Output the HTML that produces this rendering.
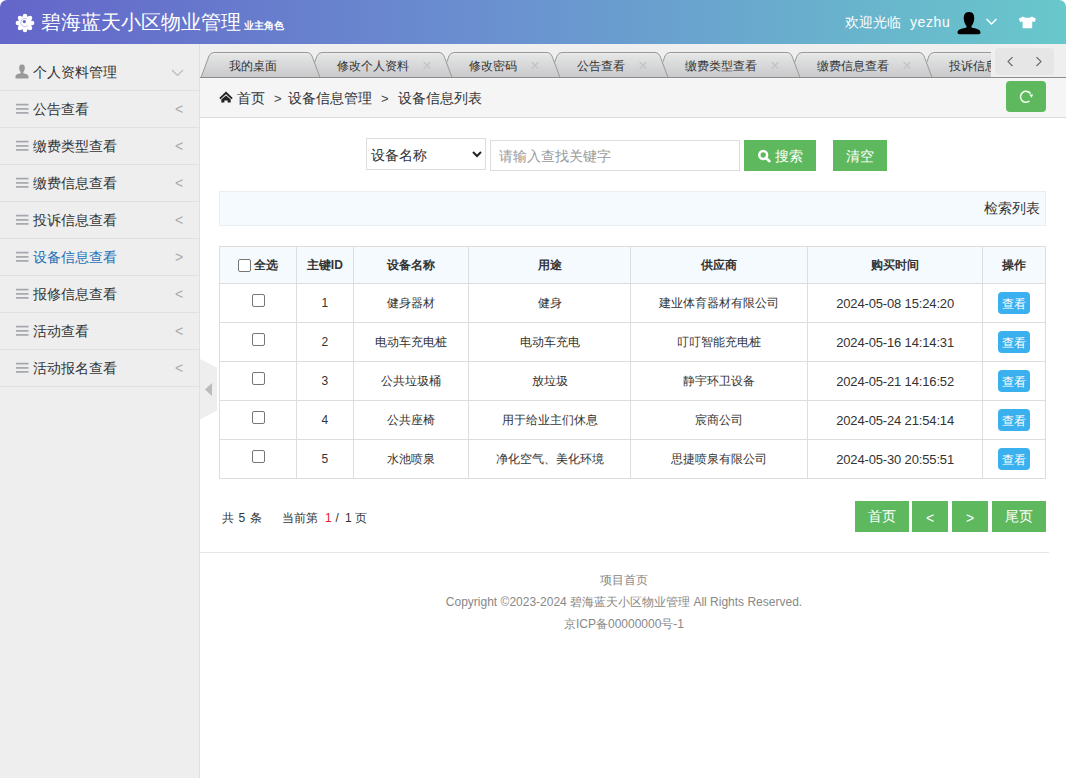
<!DOCTYPE html>
<html><head><meta charset="utf-8">
<style>
*{margin:0;padding:0;box-sizing:border-box;}
html,body{width:1066px;height:778px;overflow:hidden;background:#fff;font-family:"Liberation Sans",sans-serif;font-size:14px;color:#333;}
.a{position:absolute;white-space:nowrap;}
#hd{position:absolute;left:0;top:0;width:1066px;height:44px;background:linear-gradient(90deg,#6466c9 0%,#6a8fd0 45%,#68c8cb 100%);border-radius:7px 7px 0 0;}
#hd .logo{position:absolute;left:41px;top:8px;color:#fff;font-size:20px;line-height:28px;white-space:nowrap;}
#hd .logo small{font-size:10px;font-weight:bold;margin-left:3px;}
#hd .r{position:absolute;top:12px;color:#fff;font-size:14px;line-height:20px;white-space:nowrap;}
#side{position:absolute;left:0;top:44px;width:200px;height:734px;background:#eee;border-right:1px solid #e0e0e0;}
#side .it{position:absolute;left:0;width:199px;height:37px;border-bottom:1px solid #e0e0e0;}
#side .it span.t{position:absolute;left:33px;top:8px;font-size:14px;line-height:20px;color:#333;}
#side .it .ar{position:absolute;left:175px;top:8px;font-size:14px;line-height:20px;color:#aaa;}
#side .ham{position:absolute;left:15px;top:12px;width:14px;height:12px;}
#tabbar{position:absolute;left:200px;top:44px;width:866px;height:34px;background:#efefef;}
#crumb{position:absolute;left:200px;top:78px;width:866px;height:40px;background:#f5f5f5;border-bottom:1px solid #ddd;}
.g{position:absolute;background:#5eb95e;color:#fff;text-align:center;border-radius:2px;font-size:14px;}
.sel{position:absolute;left:366px;top:138px;width:120px;height:32px;border:1px solid #ddd;background:#fff;}
.inp{position:absolute;left:490px;top:140px;width:250px;height:31px;border:1px solid #ddd;background:#fff;}
.bar{position:absolute;left:219px;top:191px;width:827px;height:35px;border:1px solid #eaeef2;background:#f5fafe;}
table{position:absolute;left:219px;top:246px;border-collapse:collapse;width:827px;}
td,th{border:1px solid #ddd;text-align:center;font-size:12px;color:#333;}
th{height:37px;background:#f5fafe;font-weight:bold;}
td{height:39px;}
.cb{display:inline-block;width:13px;height:13px;border:1px solid #767676;border-radius:2px;background:#fff;vertical-align:middle;}
.view{display:inline-block;width:32px;height:22px;line-height:20px;padding-top:2px;vertical-align:top;background:#3ab1ee;color:#fff;border-radius:4px;font-size:12px;position:relative;left:0px;}
.dt{font-size:13px;letter-spacing:-0.15px;}
.pg{position:absolute;top:501px;height:31px;line-height:31px;background:#5eb95e;color:#fff;text-align:center;font-size:14px;}
.pt{top:510px;font-size:12px;line-height:17px;}
.ft{position:absolute;left:200px;width:848px;text-align:center;font-size:12px;color:#888;line-height:16px;}
</style></head><body>
<div id="hd">
  <svg class="a" style="left:14px;top:11.5px;" width="22" height="22" viewBox="0 0 22 22">
    <g fill="#fff"><circle cx="11" cy="11" r="6.9"/><circle cx="18.10" cy="11.00" r="2.25"/><circle cx="16.02" cy="16.02" r="2.25"/><circle cx="11.00" cy="18.10" r="2.25"/><circle cx="5.98" cy="16.02" r="2.25"/><circle cx="3.90" cy="11.00" r="2.25"/><circle cx="5.98" cy="5.98" r="2.25"/><circle cx="11.00" cy="3.90" r="2.25"/><circle cx="16.02" cy="5.98" r="2.25"/></g>
    <path d="M14.2 13.2 A4.2 4.2 0 1 1 13.2 7" fill="none" stroke="#6466c9" stroke-width="0.7" opacity="0.55"/>
    <circle cx="10.3" cy="9.6" r="1.6" fill="#6466c9"/>
  </svg>
  <div class="logo">碧海蓝天小区物业管理<small>业主角色</small></div>
  <div class="r" style="left:845px;">欢迎光临</div>
  <div class="r" style="left:910px;letter-spacing:0.6px;">yezhu</div>
  <svg class="a" style="left:956px;top:11px;" width="26" height="24" viewBox="0 0 26 24">
    <path d="M13 1 C8.5 1 7.5 4.5 7.8 8 C8 11 9.5 14 10.5 15 L10.5 16.5 C6 17.5 1.5 18.5 1.5 21.5 C1.5 23 3 23.3 5 23.3 L21 23.3 C23 23.3 24.5 23 24.5 21.5 C24.5 18.5 20 17.5 15.5 16.5 L15.5 15 C16.5 14 18 11 18.2 8 C18.5 4.5 17.5 1 13 1 Z" fill="#000"/>
  </svg>
  <svg class="a" style="left:985px;top:17px;" width="13" height="9" viewBox="0 0 13 9"><path d="M1.5 2 L6.5 7 L11.5 2" stroke="#fff" stroke-width="1.5" fill="none"/></svg>
  <svg class="a" style="left:1018px;top:16px;" width="19" height="13" viewBox="0 0 19 13"><path d="M5 0.4 L0.8 2.8 L2.2 6.1 L4.6 5.4 L4.6 12.2 L14.2 12.2 L14.2 5.4 L16.6 6.1 L18 2.8 L13.8 0.4 C12.4 2.3 6.4 2.3 5 0.4 Z" fill="#fff"/></svg>
</div>
<div id="side">
  <div class="it" style="top:10px;">
    <svg class="a" style="left:15px;top:10px;" width="14" height="15" viewBox="0 0 14 15"><path d="M7 0.5 C4.5 0.5 4 2.5 4.2 4.5 C4.4 6.5 5.2 7.6 5.7 8.2 L5.7 9.2 C3 9.8 0.5 10.5 0.5 12.5 L0.5 14.5 L13.5 14.5 L13.5 12.5 C13.5 10.5 11 9.8 8.3 9.2 L8.3 8.2 C8.8 7.6 9.6 6.5 9.8 4.5 C10 2.5 9.5 0.5 7 0.5 Z" fill="#999"/></svg>
    <span class="t">个人资料管理</span>
    <svg class="a" style="left:171px;top:15px;" width="13" height="8" viewBox="0 0 13 8"><path d="M1 1 L6.5 6.5 L12 1" stroke="#bbb" stroke-width="1.2" fill="none"/></svg>
  </div>
  <div class="it" style="top:47px;"><svg class="ham" width="14" height="12" viewBox="0 0 14 12"><rect x="1" y="0.75" width="12.5" height="1.7" fill="#a3a7ad"/><rect x="1" y="5.05" width="12.5" height="1.7" fill="#a3a7ad"/><rect x="1" y="9.05" width="12.5" height="1.7" fill="#a3a7ad"/></svg><span class="t">公告查看</span><span class="ar">&lt;</span></div>
  <div class="it" style="top:84px;"><svg class="ham" width="14" height="12" viewBox="0 0 14 12"><rect x="1" y="0.75" width="12.5" height="1.7" fill="#a3a7ad"/><rect x="1" y="5.05" width="12.5" height="1.7" fill="#a3a7ad"/><rect x="1" y="9.05" width="12.5" height="1.7" fill="#a3a7ad"/></svg><span class="t">缴费类型查看</span><span class="ar">&lt;</span></div>
  <div class="it" style="top:121px;"><svg class="ham" width="14" height="12" viewBox="0 0 14 12"><rect x="1" y="0.75" width="12.5" height="1.7" fill="#a3a7ad"/><rect x="1" y="5.05" width="12.5" height="1.7" fill="#a3a7ad"/><rect x="1" y="9.05" width="12.5" height="1.7" fill="#a3a7ad"/></svg><span class="t">缴费信息查看</span><span class="ar">&lt;</span></div>
  <div class="it" style="top:158px;"><svg class="ham" width="14" height="12" viewBox="0 0 14 12"><rect x="1" y="0.75" width="12.5" height="1.7" fill="#a3a7ad"/><rect x="1" y="5.05" width="12.5" height="1.7" fill="#a3a7ad"/><rect x="1" y="9.05" width="12.5" height="1.7" fill="#a3a7ad"/></svg><span class="t">投诉信息查看</span><span class="ar">&lt;</span></div>
  <div class="it" style="top:195px;"><svg class="ham" width="14" height="12" viewBox="0 0 14 12"><rect x="1" y="0.75" width="12.5" height="1.7" fill="#a3a7ad"/><rect x="1" y="5.05" width="12.5" height="1.7" fill="#a3a7ad"/><rect x="1" y="9.05" width="12.5" height="1.7" fill="#a3a7ad"/></svg><span class="t" style="color:#1e70b8">设备信息查看</span><span class="ar">&gt;</span></div>
  <div class="it" style="top:232px;"><svg class="ham" width="14" height="12" viewBox="0 0 14 12"><rect x="1" y="0.75" width="12.5" height="1.7" fill="#a3a7ad"/><rect x="1" y="5.05" width="12.5" height="1.7" fill="#a3a7ad"/><rect x="1" y="9.05" width="12.5" height="1.7" fill="#a3a7ad"/></svg><span class="t">报修信息查看</span><span class="ar">&lt;</span></div>
  <div class="it" style="top:269px;"><svg class="ham" width="14" height="12" viewBox="0 0 14 12"><rect x="1" y="0.75" width="12.5" height="1.7" fill="#a3a7ad"/><rect x="1" y="5.05" width="12.5" height="1.7" fill="#a3a7ad"/><rect x="1" y="9.05" width="12.5" height="1.7" fill="#a3a7ad"/></svg><span class="t">活动查看</span><span class="ar">&lt;</span></div>
  <div class="it" style="top:306px;"><svg class="ham" width="14" height="12" viewBox="0 0 14 12"><rect x="1" y="0.75" width="12.5" height="1.7" fill="#a3a7ad"/><rect x="1" y="5.05" width="12.5" height="1.7" fill="#a3a7ad"/><rect x="1" y="9.05" width="12.5" height="1.7" fill="#a3a7ad"/></svg><span class="t">活动报名查看</span><span class="ar">&lt;</span></div>
</div>
<svg class="a" style="left:200px;top:359px;" width="18" height="62" viewBox="0 0 18 62"><path d="M0 0 L17 8.5 L17 51.5 L0 60.5 Z" fill="#eee"/><path d="M5 30.5 L12 24 L12 37 Z" fill="#bbb"/></svg>

<div id="tabbar"></div>
<svg class="a" style="left:200px;top:44px;" width="866" height="34" viewBox="200 44 866 34">
  <defs>
    <linearGradient id="tg" x1="0" y1="0" x2="0" y2="1"><stop offset="0" stop-color="#eeefef"/><stop offset="0.12" stop-color="#e3e4e4"/><stop offset="1" stop-color="#c9c9cb"/></linearGradient>
    <clipPath id="tc"><rect x="200" y="44" width="791" height="34"/></clipPath>
  </defs>
  <g clip-path="url(#tc)" stroke="#999" stroke-width="1" fill="url(#tg)" id="tabs"><path d="M921 77.5 L929 56 Q930.5 52.5 934 52.5 L1051 52.5 Q1054.5 52.5 1056 56 L1064 77.5 Z"></path><text x="949" y="70" font-size="12" fill="#333" stroke="none" font-family="Liberation Sans, sans-serif">投诉信息查看</text><text x="1039" y="71" text-anchor="middle" font-size="17" fill="#c4c4c4" stroke="none" font-family="Liberation Sans, sans-serif">×</text><path d="M789 77.5 L797 56 Q798.5 52.5 802 52.5 L919 52.5 Q922.5 52.5 924 56 L932 77.5 Z"></path><text x="817" y="70" font-size="12" fill="#333" stroke="none" font-family="Liberation Sans, sans-serif">缴费信息查看</text><text x="907" y="71" text-anchor="middle" font-size="17" fill="#c4c4c4" stroke="none" font-family="Liberation Sans, sans-serif">×</text><path d="M657 77.5 L665 56 Q666.5 52.5 670 52.5 L787 52.5 Q790.5 52.5 792 56 L800 77.5 Z"></path><text x="685" y="70" font-size="12" fill="#333" stroke="none" font-family="Liberation Sans, sans-serif">缴费类型查看</text><text x="775" y="71" text-anchor="middle" font-size="17" fill="#c4c4c4" stroke="none" font-family="Liberation Sans, sans-serif">×</text><path d="M549 77.5 L557 56 Q558.5 52.5 562 52.5 L655 52.5 Q658.5 52.5 660 56 L668 77.5 Z"></path><text x="577" y="70" font-size="12" fill="#333" stroke="none" font-family="Liberation Sans, sans-serif">公告查看</text><text x="643" y="71" text-anchor="middle" font-size="17" fill="#c4c4c4" stroke="none" font-family="Liberation Sans, sans-serif">×</text><path d="M441 77.5 L449 56 Q450.5 52.5 454 52.5 L547 52.5 Q550.5 52.5 552 56 L560 77.5 Z"></path><text x="469" y="70" font-size="12" fill="#333" stroke="none" font-family="Liberation Sans, sans-serif">修改密码</text><text x="535" y="71" text-anchor="middle" font-size="17" fill="#c4c4c4" stroke="none" font-family="Liberation Sans, sans-serif">×</text><path d="M309 77.5 L317 56 Q318.5 52.5 322 52.5 L439 52.5 Q442.5 52.5 444 56 L452 77.5 Z"></path><text x="337" y="70" font-size="12" fill="#333" stroke="none" font-family="Liberation Sans, sans-serif">修改个人资料</text><text x="427" y="71" text-anchor="middle" font-size="17" fill="#c4c4c4" stroke="none" font-family="Liberation Sans, sans-serif">×</text><path d="M201 77.5 L209 56 Q210.5 52.5 214 52.5 L307 52.5 Q310.5 52.5 312 56 L320 77.5 Z"></path><text x="229" y="70" font-size="12" fill="#333" stroke="none" font-family="Liberation Sans, sans-serif">我的桌面</text></g>
  <line x1="200" y1="77.5" x2="1066" y2="77.5" stroke="#8c8c8c" stroke-width="1"/>
</svg>
<div class="a" style="left:995px;top:48px;width:59px;height:27px;background:#e6e6e6;border-radius:4px;"></div>
<svg class="a" style="left:1005px;top:55px;" width="10" height="13" viewBox="0 0 10 13"><path d="M7.5 2.2 L3 6.6 L7.5 11" stroke="#666" stroke-width="1.1" fill="none"/></svg>
<svg class="a" style="left:1034px;top:55px;" width="10" height="13" viewBox="0 0 10 13"><path d="M2.5 2.2 L7 6.6 L2.5 11" stroke="#666" stroke-width="1.1" fill="none"/></svg>

<div id="crumb"></div>
<svg class="a" style="left:216px;top:88px;" width="20" height="18" viewBox="0 0 20 18"><path d="M3.9 10.6 L10 4.8 L16.1 10.6" stroke="#222" stroke-width="1.9" fill="none"/><path d="M10 7.6 L5.3 11.6 L5.3 14.6 L8.4 14.6 L8.4 12.4 L11.6 12.4 L11.6 14.6 L14.7 14.6 L14.7 11.6 Z" fill="#222"/></svg>
<div class="a" style="left:237px;top:88px;font-size:14px;line-height:20px;">首页</div>
<div class="a" style="left:274px;top:89px;font-size:13px;line-height:20px;color:#444;">&gt;</div>
<div class="a" style="left:288px;top:88px;font-size:14px;line-height:20px;">设备信息管理</div>
<div class="a" style="left:381px;top:89px;font-size:13px;line-height:20px;color:#444;">&gt;</div>
<div class="a" style="left:398px;top:88px;font-size:14px;line-height:20px;">设备信息列表</div>
<div class="g" style="left:1006px;top:81px;width:40px;height:31px;border-radius:4px;"></div>
<svg class="a" style="left:1013px;top:84px;" width="26" height="24" viewBox="0 0 26 24"><path d="M16.54 17.01 A5.5 5.5 0 1 1 17.51 9.65" stroke="#f4fff0" stroke-width="1.55" fill="none"/><path d="M16.2 10.6 L20.2 10.4 L18.6 13.8 Z" fill="#f4fff0"/></svg>

<div class="sel"></div>
<div class="a" style="left:371px;top:145px;font-size:14px;line-height:20px;">设备名称</div>
<svg class="a" style="left:472px;top:151px;" width="10" height="7" viewBox="0 0 10 7"><path d="M1 1 L5 5 L9 1" stroke="#222" stroke-width="2" fill="none"/></svg>
<div class="inp"></div>
<div class="a" style="left:499px;top:146px;font-size:14px;line-height:20px;color:#999;">请输入查找关键字</div>
<div class="g" style="left:744px;top:140px;width:72px;height:31px;border-radius:0;"></div>
<svg class="a" style="left:757px;top:149px;" width="14" height="14" viewBox="0 0 14 14"><circle cx="6.2" cy="6" r="3.9" stroke="#fff" stroke-width="2.5" fill="none"/><path d="M8.8 8.8 L12.4 12.2" stroke="#fff" stroke-width="2.6" stroke-linecap="round"/></svg>
<div class="a" style="left:775px;top:146px;font-size:14px;line-height:20px;color:#fff;">搜索</div>
<div class="g" style="left:833px;top:140px;width:54px;height:31px;border-radius:0;"></div>
<div class="a" style="left:846px;top:146px;font-size:14px;line-height:20px;color:#fff;">清空</div>

<div class="bar"></div>
<div class="a" style="left:984px;top:198px;font-size:14px;line-height:20px;">检索列表</div>

<table>
<colgroup><col style="width:77px"><col style="width:57px"><col style="width:115px"><col style="width:163px"><col style="width:177px"><col style="width:175px"><col style="width:63px"></colgroup>
<tr><th><span class="cb"></span> 全选</th><th>主键ID</th><th>设备名称</th><th>用途</th><th>供应商</th><th>购买时间</th><th>操作</th></tr>
<tr><td><span class="cb" style="position:relative;top:-3px;left:1px;"></span></td><td>1</td><td>健身器材</td><td>健身</td><td>建业体育器材有限公司</td><td class="dt">2024-05-08 15:24:20</td><td><span class="view">查看</span></td></tr>
<tr><td><span class="cb" style="position:relative;top:-3px;left:1px;"></span></td><td>2</td><td>电动车充电桩</td><td>电动车充电</td><td>叮叮智能充电桩</td><td class="dt">2024-05-16 14:14:31</td><td><span class="view">查看</span></td></tr>
<tr><td><span class="cb" style="position:relative;top:-3px;left:1px;"></span></td><td>3</td><td>公共垃圾桶</td><td>放垃圾</td><td>静宇环卫设备</td><td class="dt">2024-05-21 14:16:52</td><td><span class="view">查看</span></td></tr>
<tr><td><span class="cb" style="position:relative;top:-3px;left:1px;"></span></td><td>4</td><td>公共座椅</td><td>用于给业主们休息</td><td>宸商公司</td><td class="dt">2024-05-24 21:54:14</td><td><span class="view">查看</span></td></tr>
<tr><td><span class="cb" style="position:relative;top:-3px;left:1px;"></span></td><td>5</td><td>水池喷泉</td><td>净化空气、美化环境</td><td>思捷喷泉有限公司</td><td class="dt">2024-05-30 20:55:51</td><td><span class="view">查看</span></td></tr>
</table>

<div class="a pt" style="left:222px;">共</div><div class="a pt" style="left:238.5px;">5</div><div class="a pt" style="left:249.5px;">条</div>
<div class="a pt" style="left:282px;">当前第</div><div class="a pt" style="left:325px;color:#dd2222;">1</div><div class="a pt" style="left:335.5px;">/</div><div class="a pt" style="left:345px;">1</div><div class="a pt" style="left:355px;">页</div>
<div class="pg" style="left:855px;width:54px;">首页</div>
<div class="pg" style="left:912px;width:36px;line-height:35px;font-size:14px;">&lt;</div>
<div class="pg" style="left:952px;width:36px;line-height:35px;font-size:14px;">&gt;</div>
<div class="pg" style="left:992px;width:54px;">尾页</div>
<div class="a" style="left:200px;top:552px;width:849px;height:1px;background:#e5e5e5;"></div>
<div class="ft" style="top:572px;">项目首页</div>
<div class="ft" style="top:594px;">Copyright ©2023-2024 碧海蓝天小区物业管理 All Rights Reserved.</div>
<div class="ft" style="top:616px;">京ICP备00000000号-1</div>


</body></html>
